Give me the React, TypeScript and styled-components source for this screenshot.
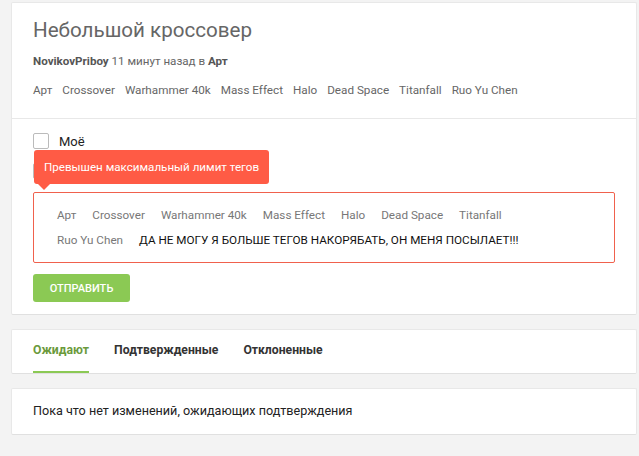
import React from 'react'
import styled, { createGlobalStyle } from 'styled-components'

const GlobalStyle = createGlobalStyle`
  html, body {
    margin: 0;
    padding: 0;
    background: #f3f3f3;
    font-family: Roboto, "Noto Sans", Arial, sans-serif;
  }
`

const headerTags = ['Арт', 'Crossover', 'Warhammer 40k', 'Mass Effect', 'Halo', 'Dead Space', 'Titanfall', 'Ruo Yu Chen']
const inputTags = ['Арт', 'Crossover', 'Warhammer 40k', 'Mass Effect', 'Halo', 'Dead Space', 'Titanfall', 'Ruo Yu Chen']

const App = () => {
  return (
    <>
      <GlobalStyle />
      <Page>
        <Card>
          <Header>
            <Title>Небольшой кроссовер</Title>
            <Meta>
              <b>NovikovPriboy</b> 11 минут назад в <b>Арт</b>
            </Meta>
            <TagRow>
              {headerTags.map(t => (
                <HeaderTag key={t}>{t}</HeaderTag>
              ))}
            </TagRow>
          </Header>
          <Form>
            <CheckRow>
              <CheckBox />
              <CheckLabel>Моё</CheckLabel>
            </CheckRow>
            <ErrorWrap>
              <CheckRow>
                <CheckBox />
              </CheckRow>
              <Tooltip>Превышен максимальный лимит тегов</Tooltip>
            </ErrorWrap>
            <TagBox>
              {inputTags.map(t => (
                <InputTag key={t}>{t}</InputTag>
              ))}
              <TagInput>ДА НЕ МОГУ Я БОЛЬШЕ ТЕГОВ НАКОРЯБАТЬ, ОН МЕНЯ ПОСЫЛАЕТ!!!</TagInput>
            </TagBox>
            <SubmitButton>Отправить</SubmitButton>
          </Form>
        </Card>
        <Card>
          <Tabs>
            <Tab $active>Ожидают</Tab>
            <Tab>Подтвержденные</Tab>
            <Tab>Отклоненные</Tab>
          </Tabs>
        </Card>
        <Card>
          <Empty>Пока что нет изменений, ожидающих подтверждения</Empty>
        </Card>
      </Page>
    </>
  )
}

const Page = styled.div`
  display: flex;
  flex-direction: column;
  gap: 14px;
  padding: 2px 2px 20px 11px;
`

const Card = styled.div`
  background: #fff;
  border: 1px solid #e8e8e8;
  border-bottom-color: #e0e0e0;
  border-radius: 2px;
`

const Header = styled.div`
  padding: 15px 21px 20px;
  border-bottom: 1px solid #e8e8e8;
`

const Title = styled.h1`
  margin: 0;
  font-size: 20.6px;
  font-weight: 400;
  color: #666;
  line-height: 24px;
`

const Meta = styled.div`
  margin-top: 11px;
  font-size: 11.6px;
  color: #666;
  line-height: 16px;
  b {
    font-weight: 700;
    color: #555;
  }
`

const TagRow = styled.div`
  display: flex;
  gap: 10px;
  margin-top: 13px;
`

const HeaderTag = styled.span`
  font-size: 11.7px;
  color: #666;
  line-height: 16px;
`

const Form = styled.div`
  padding: 14px 21px 12px;
  display: flex;
  flex-direction: column;
  align-items: flex-start;
`

const CheckRow = styled.div`
  display: flex;
  align-items: center;
  gap: 10px;
  height: 16px;
  margin-bottom: 14px;
`

const CheckBox = styled.span`
  width: 14px;
  height: 14px;
  border: 1px solid #bbb;
  border-radius: 2px;
  background: #fff;
`

const CheckLabel = styled.span`
  font-size: 13px;
  color: #222;
`

const ErrorWrap = styled.div`
  position: relative;
`

const Tooltip = styled.div`
  position: absolute;
  left: 1px;
  top: -13px;
  white-space: nowrap;
  background: #ff5b45;
  color: #fff;
  font-size: 11.6px;
  line-height: 34px;
  padding: 0 10px;
  border-radius: 3px;
  &::after {
    content: '';
    position: absolute;
    left: 4px;
    bottom: -6px;
    border-left: 6px solid transparent;
    border-right: 6px solid transparent;
    border-top: 6px solid #ff5b45;
  }
`

const TagBox = styled.div`
  box-sizing: border-box;
  width: 582px;
  margin-top: -1px;
  border: 1px solid #f0614d;
  border-radius: 2px;
  padding: 10px 40px 9px 23px;
  display: flex;
  flex-wrap: wrap;
  column-gap: 16px;
`

const InputTag = styled.span`
  font-size: 11.7px;
  color: #777;
  line-height: 25px;
`

const TagInput = styled.span`
  font-size: 11.7px;
  color: #111;
  line-height: 25px;
`

const SubmitButton = styled.button`
  margin-top: 11px;
  width: 97px;
  height: 28px;
  border: none;
  border-radius: 3px;
  background: #8bc954;
  color: #fff;
  font-family: inherit;
  font-size: 11px;
  font-weight: 500;
  text-transform: uppercase;
  cursor: pointer;
`

const Tabs = styled.div`
  display: flex;
  gap: 25px;
  padding: 0 21px;
`

const Tab = styled.div<{ $active?: boolean }>`
  font-size: 12.2px;
  font-weight: 700;
  color: ${p => (p.$active ? '#6b9a3c' : '#333')};
  line-height: 41px;
  border-bottom: 2px solid ${p => (p.$active ? '#8bc954' : 'transparent')};
`

const Empty = styled.div`
  padding: 14px 21px 15px;
  font-size: 12.6px;
  color: #222;
  line-height: 16px;
`

export default App
